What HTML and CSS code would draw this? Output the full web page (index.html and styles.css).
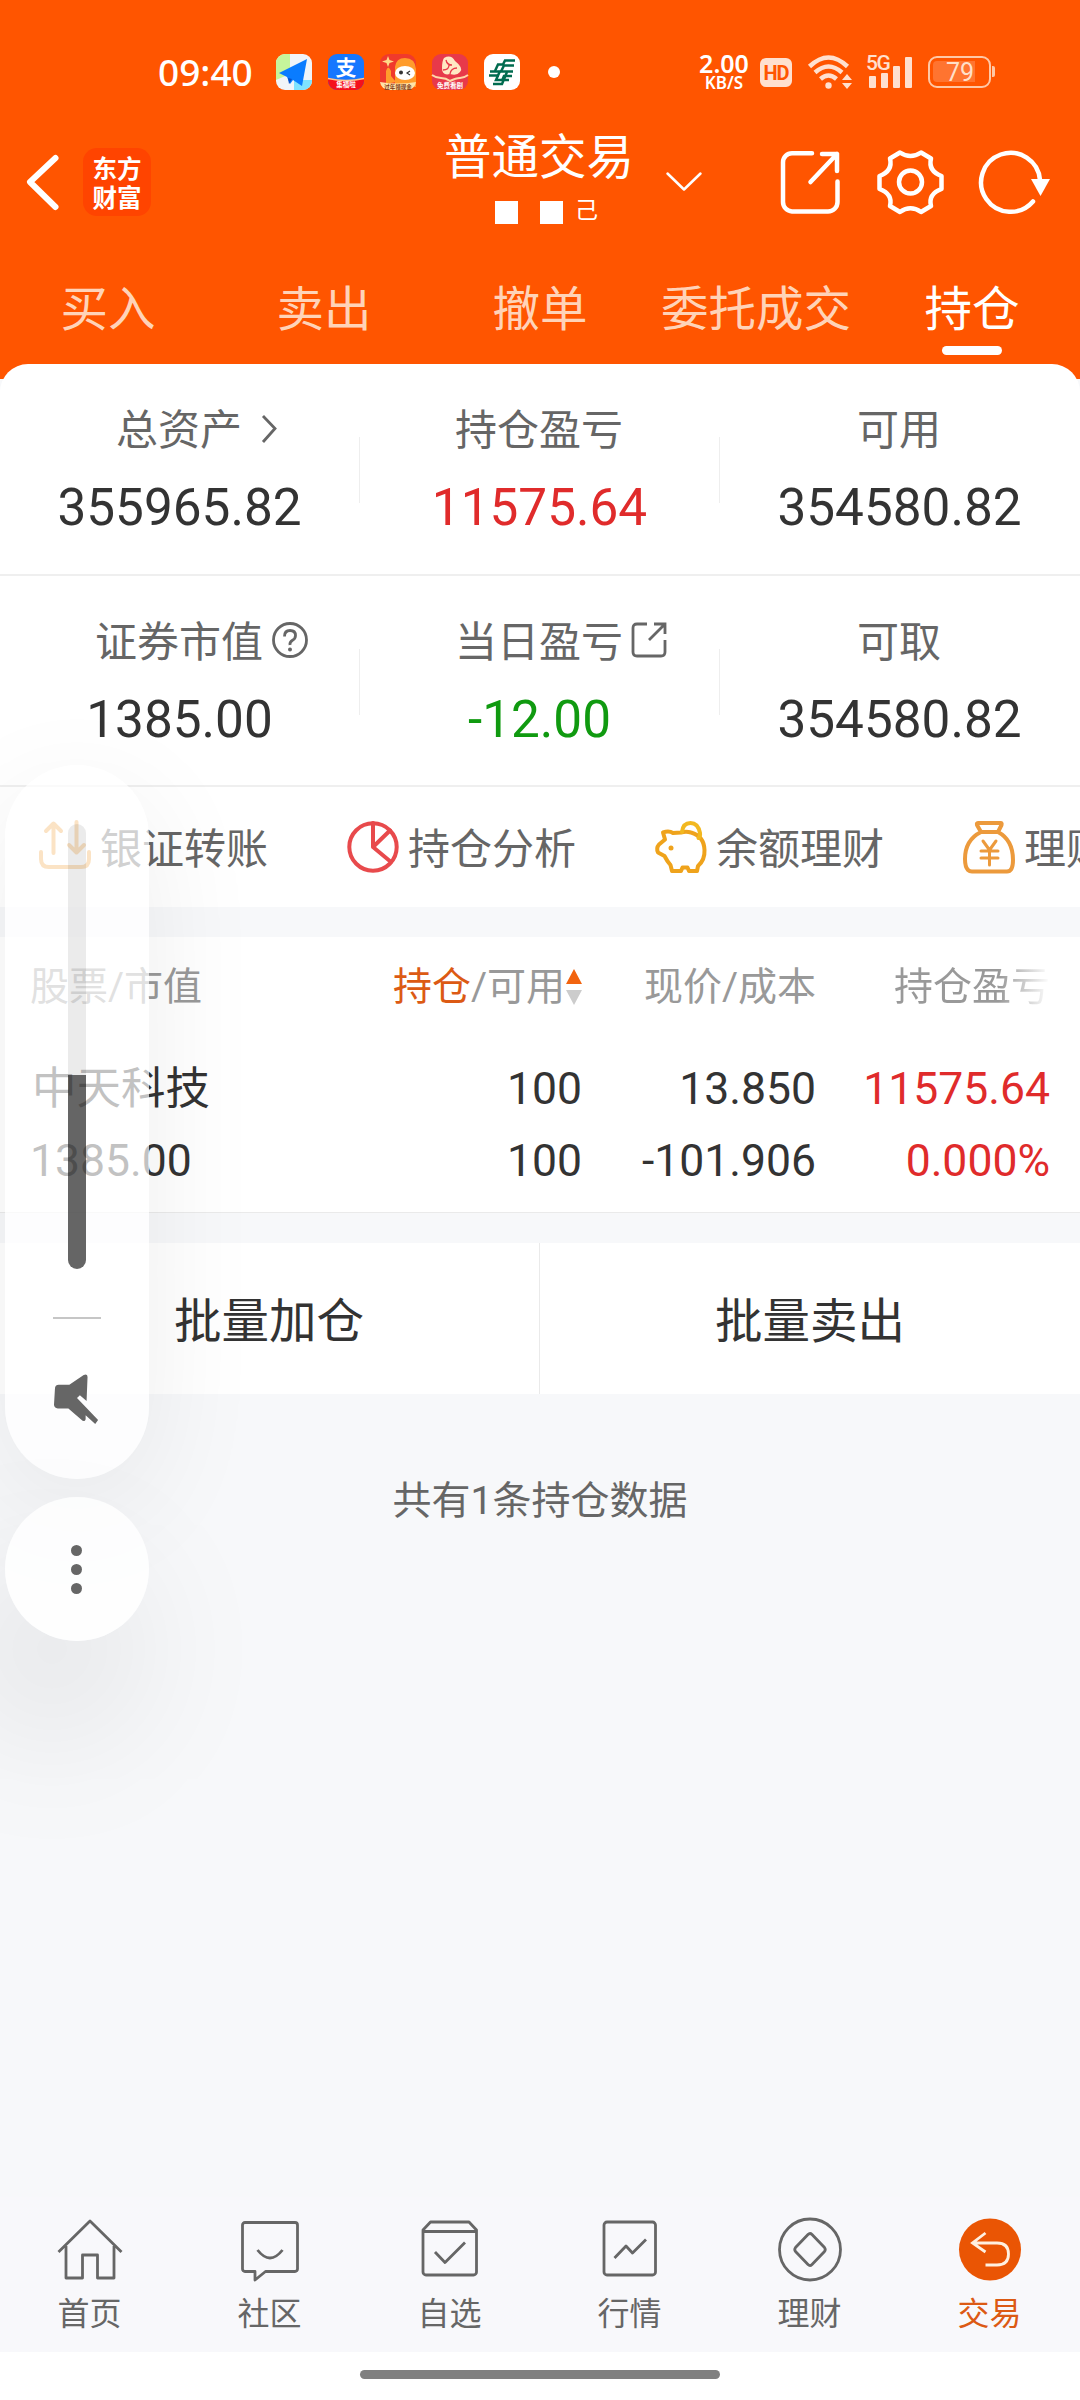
FILE: index.html
```html
<!DOCTYPE html>
<html lang="zh-CN">

<head>
    <meta charset="UTF-8">
    <meta name="viewport" content="width=device-width, initial-scale=1.0">
    <title>普通交易</title>
    <link rel="stylesheet" href="styles.css">
</head>

<body>
    <header class="header">
        <div class="status">
            <span class="clock">09:40</span>
            <div class="apps">
                <svg class="app" viewBox="0 0 36 36">
                    <rect width="36" height="36" rx="9" fill="#f1f5f9" />
                    <path d="M9 0h5v20L0 26V9a9 9 0 0 1 9-9z" fill="#c6f59b" />
                    <path d="M18 26h18v1a9 9 0 0 1-9 9h-9z" fill="#7fe3ff" />
                    <path d="M31 5L3 19l8 4 3 7 3-4 9 6z" fill="#0a7cff" />
                    <path d="M16 25l-3 5-1-6z" fill="#0550c8" />
                </svg>
                <svg class="app" viewBox="0 0 36 36">
                    <rect width="36" height="36" rx="9" fill="#1677ff" />
                    <path d="M0 24q18 5 36 0v3a9 9 0 0 1-9 9H9a9 9 0 0 1-9-9z" fill="#f5101c" />
                    <path d="M0 24.500q18 4 36 0" fill="none" stroke="#ffc890" stroke-width="1.500" />
                    <text x="18" y="21" class="app-zhi">支</text>
                    <text x="18" y="33" class="app-tag">集福啦</text>
                </svg>
                <svg class="app" viewBox="0 0 36 36">
                    <rect width="36" height="36" rx="9" fill="#f03a2c" />
                    <path d="M8 2l1.500 4L14 7.500 9.500 9 8 13 6.500 9 2 7.500 6.500 6z" fill="#ffd98a" />
                    <path d="M15 33V13q1-9 10-9 10 0 11 11v18z" fill="#ff9c2c" />
                    <path d="M6 30V17q2-7 5 0v5l5 6z" fill="#ff9c2c" />
                    <ellipse cx="25" cy="19" rx="10" ry="7" fill="#fff" />
                    <circle cx="21" cy="18.500" r="2" fill="#333" />
                    <path d="M30 17l-3 2 3 2" fill="none" stroke="#333" stroke-width="1.200" />
                    <path d="M0 28q18 3 36 0a9 9 0 0 1-9 8H9a9 9 0 0 1-9-8z" fill="#ffe3a8" />
                    <text x="18" y="34.500" class="app-tag dark">过年领现金</text>
                </svg>
                <svg class="app" viewBox="0 0 36 36">
                    <rect width="36" height="36" rx="9" fill="#e8394a" />
                    <path d="M12 4q7-4 11 3 9 7 5 11-3 4-10 2-8 2-8-6 0-7 2-10z" fill="#ffe9c4" />
                    <path d="M14 6q1 5 6 5M25 14q-6 0-7 6M11 16q6 0 6-5" fill="none" stroke="#e8394a" stroke-width="1.300" />
                    <path d="M0 21q4 3 9 3t9 3q6-3 10-3t8-3" fill="none" stroke="#ffd9a8" stroke-width="2" />
                    <text x="18" y="34" class="app-tag">免费看剧</text>
                </svg>
                <svg class="app" viewBox="0 0 36 36">
                    <rect width="36" height="36" rx="9" fill="#fff" />
                    <g fill="none" stroke="#006b4f">
                        <path d="M31 6.500H21L19 10.500H14L11 17M30 11.500H20l-3 6" stroke-width="2.500" />
                        <path d="M29 17.500H6M5 21.500h10M28 22h-8l-2 5" stroke-width="2.600" />
                        <path d="M16 17l-4 9h13M9 30h9l5-12" stroke-width="2.500" />
                    </g>
                </svg>
            </div>
            <i class="dot"></i>
            <div class="net">
                <b>2.00</b>
                <span>KB/S</span>
            </div>
            <span class="hd">HD</span>
            <svg class="wifi" viewBox="808 54 46 36">
                <g fill="none" stroke="#ffe0cf" stroke-width="4.500">
                    <path d="M809.500 66.500Q828.500 48.500 847.500 66.500" />
                    <path d="M815 72.500Q828.500 60.500 842 72.500" />
                    <path d="M820.500 79Q828.500 72 836.500 79" />
                </g>
                <circle cx="828.500" cy="85.500" r="3.200" fill="#ffe0cf" />
                <path d="M842 80l5-6 5 6zM842 83l5 6 5-6z" fill="#ffe0cf" />
            </svg>
            <div class="signal">
                <span>5G</span>
                <svg viewBox="866 55 48 34">
                    <rect x="869" y="76" width="7" height="12" rx="1" />
                    <rect x="881" y="73" width="7" height="15" rx="1" />
                    <rect x="893" y="66" width="7" height="22" rx="1" />
                    <rect x="905" y="57" width="7" height="31" rx="1" />
                </svg>
            </div>
            <div class="battery"><span>79</span></div>
        </div>

        <div class="title-bar">
            <svg class="back" viewBox="24 152 38 60">
                <path d="M55.500 158L30 182l25.500 25" />
            </svg>
            <div class="brand">东方<br>财富</div>
            <div class="title">
                <h1>普通交易</h1>
                <p><i></i><i></i><span>己</span></p>
            </div>
            <svg class="down" viewBox="664 168 40 24">
                <path d="M667.500 171.500L684 187.500l16.500-16" />
            </svg>
            <svg class="tool share" viewBox="778 148 64 68">
                <path d="M812 153.300H792a9 9 0 0 0-9 9V202a9.500 9.500 0 0 0 9 9.500H828a9.500 9.500 0 0 0 9.500-9.500V181.500" />
                <path d="M822 154h15v17M837 154l-26.500 28" />
            </svg>
            <svg class="tool gear" viewBox="874 148 72 68">
                <path d="M900 152.500Q910.500 159.500 921 152.500L931 158.500Q928 171 941.500 176V189Q928 194 931 206L921 212Q910.500 204.500 900 212L890 206Q893 194 879.500 189V176Q893 171 890 158.500Z" />
                <circle cx="910.500" cy="182" r="11.500" />
            </svg>
            <svg class="tool refresh" viewBox="976 148 76 68">
                <path d="M1040 180A29.500 29.500 0 1 0 1033 201.500" />
                <path class="head" d="M1031 179h19l-9.500 17z" />
            </svg>
        </div>

        <nav class="tabs">
            <span>买入</span>
            <span>卖出</span>
            <span>撤单</span>
            <span>委托成交</span>
            <span class="active">持仓</span>
        </nav>
    </header>

    <main class="card">
        <section class="stats">
            <div class="stat">
                <div class="label"><span>总资产<svg class="more" viewBox="0 0 20 32"><path d="M3 3l12 12.500L3 29" /></svg></span></div>
                <div class="value">355965.82</div>
            </div>
            <div class="stat">
                <div class="label"><span>持仓盈亏</span></div>
                <div class="value red">11575.64</div>
            </div>
            <div class="stat">
                <div class="label"><span>可用</span></div>
                <div class="value">354580.82</div>
            </div>
        </section>
        <section class="stats">
            <div class="stat">
                <div class="label"><span>证券市值<svg class="help" viewBox="0 0 36 36"><circle cx="18" cy="18" r="16.500" /><path d="M12.500 14.500q0-6 5.500-6t5.500 5q0 3-3 4.800T18 23" /><circle class="fill" cx="18" cy="27.500" r="2" /></svg></span></div>
                <div class="value">1385.00</div>
            </div>
            <div class="stat">
                <div class="label"><span>当日盈亏<svg class="out" viewBox="0 0 36 36"><path d="M16 2H6Q2 2 2 6V30Q2 34 6 34H30Q34 34 34 30V18M23 2H34V12M34 2L18 18" /></svg></span></div>
                <div class="value green">-12.00</div>
            </div>
            <div class="stat">
                <div class="label"><span>可取</span></div>
                <div class="value">354580.82</div>
            </div>
        </section>

        <section class="actions">
            <div class="action">
                <svg viewBox="0 0 52 52" stroke="#f0a03c">
                    <path d="M2 31v7q0 8 8 8h32q8 0 8-8v-7M14.500 32V3M7 10l7.500-7.500L22 10M37.500 1v30M30 24l7.500 7.500L45 24" />
                </svg>
                <span>银证转账</span>
            </div>
            <div class="action">
                <svg viewBox="0 0 52 52" stroke="#e84a4c">
                    <circle cx="26" cy="26" r="23.700" />
                    <path d="M26 2v24l17-16.500M26 26l18 15" />
                </svg>
                <span>持仓分析</span>
            </div>
            <div class="action">
                <svg viewBox="0 0 52 52" stroke="#efa31c">
                    <path d="M26 11.500Q31 10 36 11.500Q49 15 49.500 29Q50 39 43 45L42 50H34L32.500 46.500H27.500L26 50H17L15.500 44Q12 40 9.500 35L3 31.500Q1 27 4 23.500L10 18.500L8 11.500Q14 9.500 18 12Z" />
                    <path d="M27 11Q28 2 35.500 2T45 12Q45.500 15 43.500 17" stroke="#f2b820" />
                    <circle class="eye" cx="16" cy="27" r="2.500" />
                </svg>
                <span>余额理财</span>
            </div>
            <div class="action">
                <svg viewBox="0 0 52 52" stroke="#ec9a3c">
                    <path d="M15 2H38Q39 2 38.500 4L35 11H18L14 4Q13.500 2 15 2ZM18 11Q2 19 2 38Q2 46 5 49Q6.500 50.500 9 50.500H44Q50 50.500 50 39Q50 19 35 11" />
                    <path d="M20 20l6.500 9 6.500-9M18 30h17M18 37h17M26.500 29v15" stroke-width="3" />
                </svg>
                <span>理财</span>
            </div>
        </section>
    </main>

    <section class="table">
        <div class="row head">
            <span>股票/市值</span>
            <span class="sorted"><em>持仓</em>/可用<svg viewBox="0 0 16 36"><path d="M8 0l8 15H0z" fill="#f2640f" /><path d="M8 36l8-15H0z" fill="#ccc" /></svg></span>
            <span>现价/成本</span>
            <span class="fade">持仓盈亏</span>
        </div>
        <div class="row first">
            <span class="name">中天科技</span>
            <span>100</span>
            <span>13.850</span>
            <span class="red">11575.64</span>
        </div>
        <div class="row">
            <span>1385.00</span>
            <span>100</span>
            <span>-101.906</span>
            <span class="red">0.000%</span>
        </div>
    </section>

    <section class="batch">
        <button>批量加仓</button>
        <button>批量卖出</button>
    </section>

    <p class="total">共有1条持仓数据</p>

    <footer class="tabbar">
        <div class="item">
            <svg viewBox="0 0 66 66"><path d="M1.500 35L33 4l31.500 31M9 29v32h16.500V38h15v23H57V29" /></svg>
            <span>首页</span>
        </div>
        <div class="item">
            <svg viewBox="0 0 66 66"><path d="M8 5.500H58a2.500 2.500 0 0 1 2.500 2.500V52a2.500 2.500 0 0 1-2.500 2.500H28.500L18 63V54.500H8A2.500 2.500 0 0 1 5.500 52V8A2.500 2.500 0 0 1 8 5.500ZM20.500 33q12.500 16 25 0" /></svg>
            <span>社区</span>
        </div>
        <div class="item">
            <svg viewBox="0 0 66 66"><path d="M13.500 5H52L59.500 13V55a3 3 0 0 1-3 3H9a3 3 0 0 1-3-3V13ZM6 14.500H59.500M18 35l10 10.500L48 25.500" /></svg>
            <span>自选</span>
        </div>
        <div class="item">
            <svg viewBox="0 0 66 66"><rect x="7" y="5" width="51.500" height="53" rx="3" /><path d="M17.500 41l11.500-12 6.500 7L49 22.500" /></svg>
            <span>行情</span>
        </div>
        <div class="item">
            <svg viewBox="0 0 66 66"><circle cx="33" cy="32.500" r="30.500" /><path d="M35 17.500L47.500 30.500Q49 32.500 47.500 34.500L35 47.500Q33 49.500 31 47.500L18.500 34.500Q17 32.500 18.500 30.500L31 17.500Q33 15.500 35 17.500Z" /></svg>
            <span>理财</span>
        </div>
        <div class="item on">
            <svg viewBox="0 0 66 66"><circle cx="33" cy="32.500" r="31" /><path d="M28.500 16L15.500 26l13 9M16 26H40Q51.500 26 51.500 37T40 48H28.500" /></svg>
            <span>交易</span>
        </div>
    </footer>
    <div class="gesture"><i></i></div>

    <!-- system volume panel, floats over the page -->
    <aside class="volume">
        <div class="panel">
            <div class="slider"><i></i></div>
            <hr>
            <svg class="mute" viewBox="0 0 48 56">
                <path d="M5 12H16L31 2Q35 0 35 4L34 29L27 23L24 26L46 49L43 53L33 44V48Q32 52 28 48L15 37H4Q0 36 0 33L1 16Q1 12 5 12Z" />
            </svg>
        </div>
        <div class="dots">
            <i></i><i></i><i></i>
        </div>
    </aside>
</body>

</html>
```

FILE: styles.css
```css
* {
    box-sizing: border-box;
    margin: 0;
    padding: 0;
}

body {
    position: relative;
    width: 1080px;
    height: 2400px;
    overflow: hidden;
    display: flex;
    flex-direction: column;
    background-color: #f7f8fa;
    color: #333;
    font-family: Roboto, "Noto Sans CJK SC", sans-serif;
}

svg {
    display: block;
    flex: none;
    fill: none;
    overflow: visible;
}

i,
em {
    font-style: normal;
}

/* header */
.header {
    height: 379px;
    flex: none;
    background-color: #ff5500;
    color: #fff;
}

.status {
    height: 96px;
    padding: 48px 0 0 158px;
    display: flex;
    align-items: center;
}

.clock {
    width: 118px;
    font-family: "Noto Sans", sans-serif;
    font-size: 37px;
    font-weight: 500;
    line-height: 48px;
}

.apps {
    display: flex;
    gap: 16px;
}

.app {
    width: 36px;
    height: 36px;
}

.app-zhi {
    fill: #fff;
    font-size: 21px;
    font-weight: 700;
    text-anchor: middle;
}

.app-tag {
    fill: #fff;
    font-size: 6.5px;
    font-weight: 700;
    text-anchor: middle;
}

.app-tag.dark {
    fill: #7a3410;
    font-size: 5.5px;
}

.dot {
    width: 12px;
    height: 12px;
    margin-left: 28px;
    border-radius: 50%;
    background-color: #fff;
}

.net {
    width: 52px;
    margin-left: 138px;
    display: flex;
    flex-direction: column;
    align-items: center;
    font-family: "Noto Sans", sans-serif;
}

.net b {
    font-size: 25px;
    font-weight: 600;
    line-height: 21px;
}

.net span {
    font-size: 17px;
    font-weight: 600;
    line-height: 17px;
}

.hd {
    width: 32px;
    height: 29px;
    margin-left: 10px;
    border-radius: 6px;
    background-color: #ffe0cf;
    color: #ff5500;
    font-size: 20px;
    font-weight: 700;
    letter-spacing: -1px;
    line-height: 30px;
    text-align: center;
}

.wifi {
    width: 46px;
    height: 36px;
    margin-left: 16px;
}

.signal {
    position: relative;
    width: 48px;
    height: 34px;
    margin-left: 12px;
}

.signal svg {
    fill: #ffe0cf;
}

.signal span {
    position: absolute;
    left: 0;
    top: 0;
    color: #ffe0cf;
    font-size: 21px;
    font-weight: 500;
    letter-spacing: -1.5px;
    line-height: 16px;
}

.battery {
    position: relative;
    width: 63px;
    height: 32px;
    margin-left: 14px;
    padding: 3px;
    border: 2.5px solid #ffc8a6;
    border-radius: 9px;
}

.battery::after {
    content: "";
    position: absolute;
    right: -6px;
    top: 8px;
    width: 3px;
    height: 11px;
    border-radius: 0 2px 2px 0;
    background-color: #ffc8a6;
}

.battery span {
    display: block;
    width: 42px;
    height: 21px;
    border-radius: 4px 0 0 4px;
    background-color: #ff7430;
    color: #ffdfc8;
    font-size: 25px;
    line-height: 23px;
    padding-left: 13px;
}

.title-bar {
    height: 172px;
    padding-left: 24px;
    display: flex;
    align-items: center;
}

.title-bar svg {
    stroke: #fff;
    stroke-linecap: round;
    stroke-linejoin: round;
}

.back {
    width: 38px;
    height: 60px;
    stroke-width: 6;
}

.brand {
    width: 68px;
    height: 68px;
    margin-left: 21px;
    padding-top: 5px;
    border-radius: 14px;
    background-color: #ff4400;
    font-family: "Noto Sans CJK SC", sans-serif;
    font-size: 24.5px;
    font-weight: 700;
    line-height: 29px;
    text-align: center;
}

.title {
    width: 192px;
    height: 120px;
    margin-left: 293px;
    padding-top: 8px;
}

.title h1 {
    font-size: 47.5px;
    font-weight: 400;
    line-height: 57px;
}

.title p {
    height: 24px;
    margin-top: 14px;
    padding-left: 51px;
    display: flex;
}

.title i {
    width: 23px;
    height: 23px;
    margin-right: 22px;
    background-color: #fff;
}

.title span {
    margin-left: -10px;
    font-size: 23px;
    line-height: 20px;
}

.down {
    width: 40px;
    height: 24px;
    margin-left: 28px;
    stroke-width: 2.5;
}

.tool {
    height: 68px;
    stroke-width: 4.5;
}

.share {
    width: 64px;
    margin-left: 74px;
}

.gear {
    width: 72px;
    margin-left: 32px;
}

.refresh {
    width: 76px;
    margin-left: 30px;
}

.title-bar .head {
    fill: #fff;
    stroke: none;
}

.tabs {
    display: flex;
}

.tabs span {
    width: 216px;
    height: 96px;
    color: #ffd3b8;
    font-size: 47.5px;
    line-height: 85px;
    text-align: center;
}

.tabs .active {
    color: #fff;
}

.tabs .active::after {
    content: "";
    display: block;
    width: 60px;
    height: 9px;
    margin: -7px auto 0;
    border-radius: 5px;
    background-color: #fff;
}

/* asset card */
.card {
    margin-top: -15px;
    flex: none;
    border-radius: 28px 28px 0 0;
    background-color: #fff;
}

.stats {
    height: 212px;
    display: flex;
    border-bottom: 2px solid #efefef;
}

.stats + .stats {
    height: 211px;
}

.stat {
    flex: 1;
    padding-top: 37px;
    text-align: center;
    background: linear-gradient(#eee, #eee) no-repeat right 73px / 1px 66px;
}

.stat:last-child {
    background: none;
}

.label {
    color: #666;
    font-size: 42px;
    line-height: 60px;
}

.label span {
    position: relative;
    left: -1px;
}

.label svg {
    position: absolute;
    left: 100%;
    stroke: #666;
    stroke-width: 2.8;
}

.label .more {
    top: 7px;
    width: 20px;
    height: 32px;
    margin-left: 18px;
}

.label .help {
    top: 4px;
    width: 36px;
    height: 36px;
    margin-left: 9px;
}

.label .out {
    top: 4px;
    width: 36px;
    height: 36px;
    margin-left: 8px;
}

.help .fill {
    fill: #666;
    stroke: none;
}

.value {
    margin-top: 17px;
    padding-right: 1px;
    font-size: 51.3px;
    line-height: 60px;
}

.red {
    color: #e02b2b;
}

.green {
    color: #109a10;
}

.actions {
    height: 120px;
    padding-left: 39px;
    display: flex;
    overflow: hidden;
}

.action {
    width: 308px;
    flex: none;
    display: flex;
    align-items: center;
    color: #666;
    font-size: 42px;
}

.action svg {
    width: 52px;
    height: 52px;
    margin-right: 9px;
    stroke-width: 4;
    stroke-linecap: round;
    stroke-linejoin: round;
}

.action .eye {
    fill: #efa31c;
    stroke: none;
}

.action span {
    line-height: 60px;
    margin-top: 5px;
}

/* positions table */
.table {
    height: 276px;
    flex: none;
    margin-top: 30px;
    padding: 20px 30px 0;
    background-color: #fff;
    border-bottom: 1px solid #eaeaea;
}

.row {
    display: grid;
    grid-template-columns: 250px 302px 234px 234px;
    font-size: 44.5px;
    line-height: 72px;
    text-align: right;
}

.row > :first-child {
    text-align: left;
}

.row.head {
    color: #999;
    font-size: 39px;
    line-height: 60px;
}

.row.first {
    margin-top: 36px;
}

.row .name {
    padding-left: 2px;
}

.sorted {
    display: flex;
    justify-content: flex-end;
    align-items: center;
}

.sorted em {
    color: #dc5a14;
}

.sorted svg {
    width: 16px;
    height: 36px;
    margin-left: 1px;
}

.fade {
    background: linear-gradient(90deg, #999 78%, #fff 100%);
    -webkit-background-clip: text;
    background-clip: text;
    color: transparent;
}

.batch {
    height: 151px;
    flex: none;
    margin-top: 30px;
    display: flex;
    background-color: #fff;
}

.batch button {
    width: 50%;
    border: none;
    background: none;
    color: #333;
    font-family: inherit;
    font-size: 47.5px;
    line-height: 60px;
    padding-top: 6px;
}

.batch button:first-child {
    border-right: 1px solid #eaeaea;
    padding-right: 1px;
}

.total {
    margin-top: 77px;
    color: #666;
    font-size: 39px;
    line-height: 60px;
    text-align: center;
}

/* bottom tab bar */
.tabbar {
    height: 155px;
    flex: none;
    margin-top: auto;
    padding-top: 20px;
    display: flex;
    background-color: #f8f8fb;
}

.item {
    flex: 1;
    display: flex;
    flex-direction: column;
    align-items: center;
    color: #666;
    font-size: 32px;
    line-height: 40px;
}

.item svg {
    width: 66px;
    height: 66px;
    margin: 0 1px 11px 0;
    stroke: #666;
    stroke-width: 2.8;
    stroke-linejoin: round;
}

.item span {
    margin-right: 1px;
}

.item.on {
    color: #dc5a14;
}

.item.on svg {
    stroke: #fff0e0;
    stroke-linejoin: miter;
}

.item.on circle {
    fill: #ea5504;
    stroke: none;
}

.gesture {
    height: 48px;
    flex: none;
    padding-top: 18px;
    background-color: #fff;
}

.gesture i {
    display: block;
    width: 360px;
    height: 9px;
    margin: 0 auto;
    border-radius: 5px;
    background-color: #808080;
}

/* volume panel */
.volume {
    position: absolute;
    left: 5px;
    top: 765px;
    width: 144px;
}

.panel {
    height: 714px;
    padding-top: 59px;
    display: flex;
    flex-direction: column;
    align-items: center;
    border-radius: 72px;
    background-color: rgba(255, 255, 255, 0.7);
    box-shadow: 0 30px 120px rgba(0, 0, 0, 0.07);
}

.slider {
    width: 18px;
    height: 445px;
    padding-top: 251px;
    border-radius: 9px;
    background-color: rgba(0, 0, 0, 0.08);
    overflow: hidden;
}

.slider i {
    display: block;
    height: 194px;
    background-color: rgba(0, 0, 0, 0.57);
}

.panel hr {
    width: 48px;
    height: 2px;
    margin-top: 48px;
    border: none;
    background-color: #c6c6c6;
}

.mute {
    width: 46px;
    height: 54px;
    margin-top: 54px;
    fill: #666;
}

.dots {
    height: 144px;
    margin-top: 18px;
    padding-right: 2px;
    display: flex;
    flex-direction: column;
    align-items: center;
    justify-content: center;
    gap: 8px;
    border-radius: 50%;
    background-color: rgba(255, 255, 255, 0.8);
    box-shadow: -25px 80px 150px 10px rgba(0, 0, 0, 0.1);
}

.dots i {
    width: 11px;
    height: 11px;
    border-radius: 50%;
    background-color: #666;
}
```
